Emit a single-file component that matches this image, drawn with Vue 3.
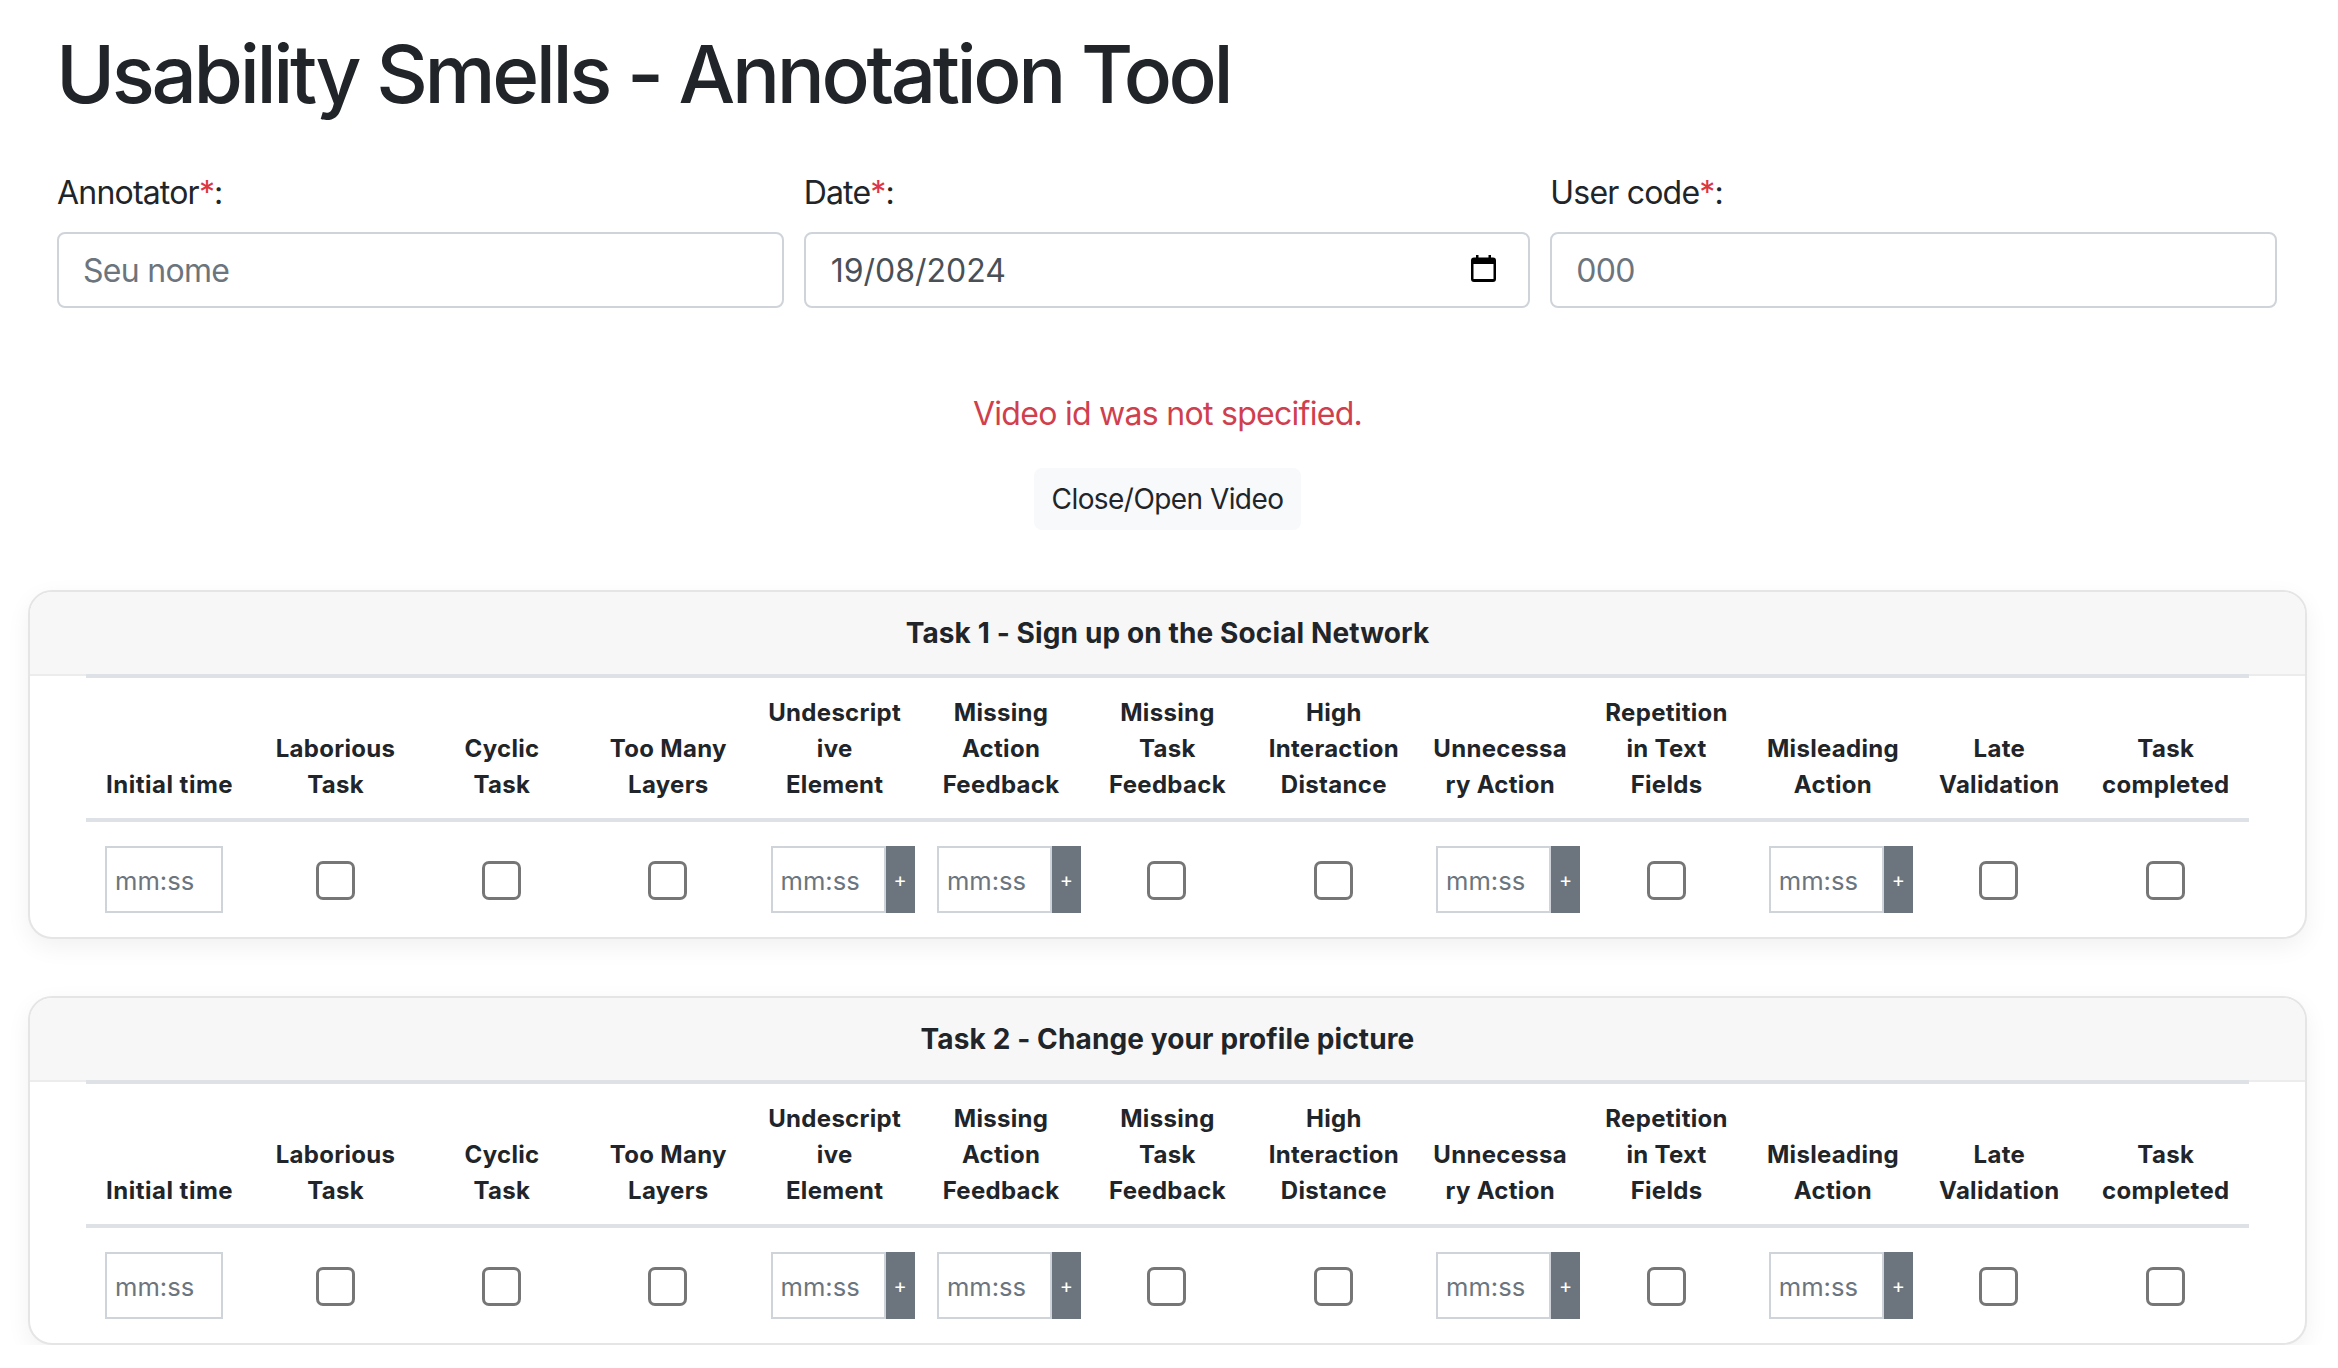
<template>
  <div class="page">
    <h1 class="title">Usability Smells - Annotation Tool</h1>

    <div class="form-row">
      <div class="field">
        <label>Annotator<span class="req">*</span>:</label>
        <input class="control" type="text" placeholder="Seu nome">
      </div>
      <div class="field">
        <label>Date<span class="req">*</span>:</label>
        <div class="date-wrap">
          <input class="control date" type="text" value="19/08/2024">
          <svg class="cal" viewBox="0 0 25 27" width="25" height="27">
            <path fill="#000" fill-rule="evenodd" d="M5 0h2.5v2.5h10V0H20v2.5h2a3 3 0 0 1 3 3V24a3 3 0 0 1-3 3H3a3 3 0 0 1-3-3V5.5a3 3 0 0 1 3-3h2zM2.5 9v15h20V9z" />
          </svg>
        </div>
      </div>
      <div class="field">
        <label>User code<span class="req">*</span>:</label>
        <input class="control" type="text" placeholder="000">
      </div>
    </div>

    <p class="error">Video id was not specified.</p>
    <div class="video-btn-row">
      <button class="video-btn">Close/Open Video</button>
    </div>

    <div v-for="task in tasks" :key="task" class="card">
      <div class="card-header">{{ task }}</div>
      <div class="card-body">
        <table>
          <thead>
            <tr>
              <th v-for="col in columns" :key="col.name" :class="{ first: col.name === 'Initial time' }">{{ col.name }}</th>
            </tr>
          </thead>
          <tbody>
            <tr>
              <td v-for="col in columns" :key="col.name" :class="{ center: col.type === 'check' }">
                <input v-if="col.type === 'time'" class="time" type="text" placeholder="mm:ss">
                <div v-else-if="col.type === 'group'" class="time-group">
                  <input class="time" type="text" placeholder="mm:ss">
                  <button class="add">+</button>
                </div>
                <input v-else class="check" type="checkbox">
              </td>
            </tr>
          </tbody>
        </table>
      </div>
    </div>
  </div>
</template>

<script setup>
const tasks = [
  'Task 1 - Sign up on the Social Network',
  'Task 2 - Change your profile picture'
]

const columns = [
  { name: 'Initial time', type: 'time' },
  { name: 'Laborious Task', type: 'check' },
  { name: 'Cyclic Task', type: 'check' },
  { name: 'Too Many Layers', type: 'check' },
  { name: 'Undescriptive Element', type: 'group' },
  { name: 'Missing Action Feedback', type: 'group' },
  { name: 'Missing Task Feedback', type: 'check' },
  { name: 'High Interaction Distance', type: 'check' },
  { name: 'Unnecessary Action', type: 'group' },
  { name: 'Repetition in Text Fields', type: 'check' },
  { name: 'Misleading Action', type: 'group' },
  { name: 'Late Validation', type: 'check' },
  { name: 'Task completed', type: 'check' }
]
</script>

<style>
body {
  background: #fff;
}
</style>

<style scoped>
.page {
  box-sizing: border-box;
  width: 2338px;
  padding: 0 31px 0 28px;
  font-family: Inter, "Liberation Sans", sans-serif;
  color: #212529;
}

.title {
  margin: 0;
  padding: 26px 0 0 28px;
  font-size: 80px;
  font-weight: 500;
  line-height: 96px;
  letter-spacing: -3.37px;
}

.form-row {
  display: grid;
  grid-template-columns: repeat(3, 1fr);
  column-gap: 20px;
  margin-top: 47px;
  padding: 0 30px 0 29px;
}

.field label {
  display: block;
  font-size: 32px;
  line-height: 48px;
  margin-bottom: 15px;
  letter-spacing: -0.8px;
}

.req {
  color: #dc3545;
}

.date-wrap {
  position: relative;
}

.cal {
  position: absolute;
  right: 34px;
  top: 23px;
}

.control {
  box-sizing: border-box;
  display: block;
  width: 100%;
  height: 76px;
  padding: 12px 24px;
  border: 2px solid #ced4da;
  border-radius: 8px;
  font: inherit;
  font-size: 32px;
  letter-spacing: -0.7px;
  color: #495057;
  outline: none;
}

.control.date {
  padding-left: 25px;
  letter-spacing: 0;
}

.control::placeholder {
  color: #6c757d;
}

.error {
  margin: 82px 0 0;
  text-align: center;
  font-size: 32px;
  line-height: 48px;
  letter-spacing: -0.72px;
  color: #d03f4e;
}

.video-btn-row {
  display: flex;
  justify-content: center;
  margin-top: 30px;
}

.video-btn {
  height: 62px;
  padding: 0 18px;
  border: none;
  border-radius: 8px;
  background: #f8f9fa;
  font: inherit;
  font-size: 28px;
  letter-spacing: -0.56px;
  color: #212529;
}

.card {
  margin-top: 57px;
  border: 2px solid #e5e5e5;
  border-radius: 24px;
  background: #fff;
  box-shadow: 0 8px 24px rgba(0, 0, 0, 0.06);
  overflow: hidden;
}

.video-btn-row + .card {
  margin-top: 60px;
}

.card-header {
  height: 82px;
  line-height: 82px;
  text-align: center;
  background: #f7f7f7;
  border-bottom: 2px solid #ececec;
  font-size: 28px;
  font-weight: 700;
  letter-spacing: 0.12px;
}

.card-body {
  padding: 0 56px;
  margin-top: -2px;
}

table {
  table-layout: fixed;
  width: 100%;
  border-collapse: collapse;
}

th {
  padding: 17px 15px 15px;
  border-top: 4px solid #dee2e6;
  border-bottom: 4px solid #dee2e6;
  font-size: 24px;
  font-weight: 700;
  line-height: 36px;
  letter-spacing: 0.3px;
  text-align: center;
  vertical-align: bottom;
  overflow-wrap: break-word;
}

th.first {
  padding: 17px 0 15px 20px;
  text-align: left;
  letter-spacing: 0.5px;
}

td {
  padding: 24px 20px 24px 19px;
  vertical-align: middle;
}

td.center {
  text-align: center;
}

.time {
  box-sizing: border-box;
  display: block;
  width: 118px;
  height: 67px;
  padding: 2px 8px 0;
  border: 2px solid #ced4da;
  font: inherit;
  font-size: 25.6px;
  color: #495057;
  outline: none;
}

.time::placeholder {
  color: #6c757d;
}

.time-group {
  display: flex;
  width: 144px;
}

.time-group .time {
  flex: none;
  width: 115px;
}

.add {
  flex: none;
  width: 29px;
  height: 67px;
  padding: 0;
  border: none;
  background: #6c757d;
  color: #fff;
  font: inherit;
  font-size: 20px;
}

.check {
  appearance: none;
  box-sizing: border-box;
  display: inline-block;
  width: 39px;
  height: 39px;
  margin: 2px 0 0;
  border: 3px solid #767676;
  border-radius: 7px;
  background: #fff;
  vertical-align: middle;
}
</style>
